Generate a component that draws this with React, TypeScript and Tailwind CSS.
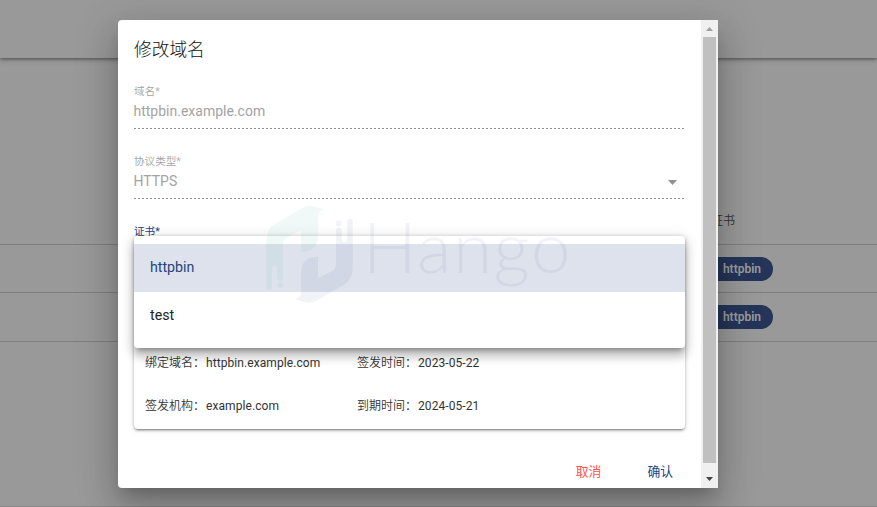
import type { ReactNode } from "react";

function Chip() {
  return (
    <span className="flex h-6 w-[70px] items-center justify-end rounded-full bg-[#25355a] pr-3 text-[12px] leading-6 font-semibold text-[#9c9c9c]">
      httpbin
    </span>
  );
}

function Row({ children, className }: { children?: ReactNode; className: string }) {
  return <div className={`flex items-center border-b border-[#7e7e7e] pl-[703px] ${className}`}>{children}</div>;
}

function Field({ label, value, select }: { label: string; value: string; select?: boolean }) {
  return (
    <div className="h-[70px] text-[#a3a3a3]">
      <div className="h-[15px] pt-px text-[10.6px] leading-[15px] font-[350]">{label}</div>
      <div className="flex h-[30px] items-start justify-between pt-[3px] pr-2 text-[14px] leading-[20px]">
        <span className="-ml-[0.5px]">{value}</span>
        {select && (
          <svg className="mt-[9px] h-[5px] w-[9px]" viewBox="0 0 9 5">
            <path d="M0 0h9L4.500 5z" fill="#919191" />
          </svg>
        )}
      </div>
      <div className="h-px bg-[repeating-linear-gradient(90deg,#939393_0px,#939393_2px,transparent_2px,transparent_4px)]" />
    </div>
  );
}

function Info({ label, value }: { label: string; value: string }) {
  return (
    <div className="flex text-[12px] leading-[18px] text-[#333]">
      <span className="w-[61px] font-[350]">{label}：</span>
      <span className="tracking-[0.08px]">{value}</span>
    </div>
  );
}

const RIBBON =
  "M2.300 83V37Q2.300 25 11 20L39 3.500Q43 1 48 2L60 5.300Q54 7 54 12V31C54 43 48 47.700 37 47.700V26L24 33Q19 35 19 41V74C19 78 13.300 78 13.300 74V65C13.300 61 7.700 61 7.700 65V83C7.700 86.500 2.300 86.500 2.300 83z";

function Watermark() {
  return (
    <div className="pointer-events-none absolute top-[204px] left-[264px] flex opacity-[0.055]">
      <svg className="h-[102px] w-[94px] shrink-0" viewBox="0 0 94 102">
        <g fill="#16a58c">
          <path d={RIBBON} />
          <circle cx="16.300" cy="81" r="2.800" />
        </g>
        <g fill="#1e347b" transform="rotate(180 45.500 50.200)">
          <path d={RIBBON} />
          <circle cx="16.300" cy="81" r="2.800" />
        </g>
      </svg>
      <span className="ml-[5px] -mt-px font-['Lato'] text-[71px] leading-[86px] font-light tracking-[1.6px] text-[#1e347b]">
        Hango
      </span>
    </div>
  );
}

export default function App() {
  return (
    <div className="relative h-[507px] w-[877px] overflow-hidden bg-[#999] font-['Roboto','Noto_Sans_CJK_SC',sans-serif]">
      <div className="h-[58px] bg-[#999] shadow-[0_1px_3px_rgba(0,0,0,0.35),0_2px_5px_rgba(0,0,0,0.2)]" />
      <Row className="mt-[138px] h-[49px] pt-[2px] text-[12px] font-[350] text-[#333]">
        <span className="pl-[8px]">证书</span>
      </Row>
      <Row className="h-[48px]"><Chip /></Row>
      <Row className="h-[49px]"><Chip /></Row>

      <main className="absolute top-5 left-[118px] flex h-[468px] w-[600px] rounded-l-[4px] bg-white shadow-[0_10px_14px_-6px_rgba(0,0,0,0.2),0_22px_34px_3px_rgba(0,0,0,0.14),0_8px_41px_7px_rgba(0,0,0,0.12)]">
        <div className="w-[583px] px-4 pt-[17px]">
          <h1 className="h-[46px] text-[17.7px] leading-[26px] font-light text-[#111]">修改域名</h1>
          <Field label="域名*" value="httpbin.example.com" />
          <Field label="协议类型*" value="HTTPS" select />
          <div className="h-[13px] pt-px text-[10.6px] leading-[15px] text-[#26437d]">证书*</div>
          <div className="relative h-[193px] w-[551px] rounded-[4px] shadow-[0_3px_1px_-2px_rgba(0,0,0,0.2),0_2px_2px_rgba(0,0,0,0.14),0_1px_4px_rgba(0,0,0,0.25)]">
            <div className="grid grid-cols-[212px_1fr] gap-y-[25px] px-[11px] pt-[118px]">
              <Info label="绑定域名" value="httpbin.example.com" />
              <Info label="签发时间" value="2023-05-22" />
              <Info label="签发机构" value="example.com" />
              <Info label="到期时间" value="2024-05-21" />
            </div>
            <div className="absolute inset-x-0 top-0 h-[112px] rounded-[4px] bg-white pt-2 text-[14.2px] text-[#222] shadow-[0_5px_5px_-3px_rgba(0,0,0,0.3),0_8px_10px_1px_rgba(0,0,0,0.18),0_3px_14px_2px_rgba(0,0,0,0.12)]">
              <div className="h-12 bg-[#dde2ec] px-4 leading-[46px] text-[#26437d]">httpbin</div>
              <div className="h-12 px-4 leading-[46px]">test</div>
            </div>
          </div>
          <div className="flex justify-end gap-[46px] pt-[34px] pr-3 text-[12.8px] leading-[18px]">
            <button className="text-[#ff5252]">取消</button>
            <button className="text-[#26437d]">确认</button>
          </div>
        </div>
        <div className="flex h-full w-[17px] flex-col items-center bg-[#f0f0f0]">
          <svg className="h-[17px] w-[17px]" viewBox="0 0 17 17">
            <path d="M5 11L8.500 7L12 11z" fill="#a0a0a0" />
          </svg>
          <div className="h-[426px] w-[13px] bg-[#c0c0c0]" />
          <svg className="h-[25px] w-[17px]" viewBox="0 0 17 25">
            <path d="M5 14h7L8.500 18z" fill="#444" />
          </svg>
        </div>
      </main>
      <Watermark />
      <div className="absolute inset-x-0 bottom-0 h-px bg-black/10" />
    </div>
  );
}
